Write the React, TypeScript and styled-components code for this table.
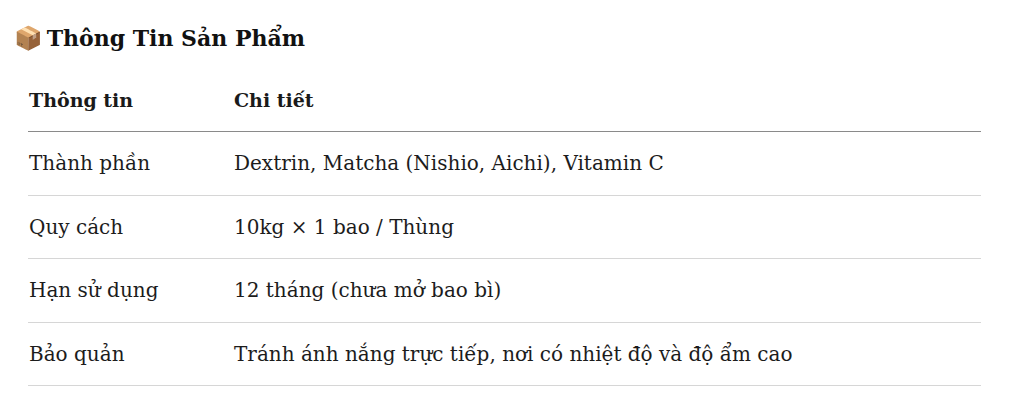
import React from "react";
import styled, { createGlobalStyle } from "styled-components";

const Global = createGlobalStyle`
  html, body { margin: 0; padding: 0; background: #ffffff; }
  body { font-family: "DejaVu Serif", "Liberation Serif", serif; color: #1a1a1a; }
`;

const Page = styled.div`
  padding: 20px 43px 0 14px;
  display: flex;
  flex-direction: column;
`;

const Title = styled.h2`
  margin: 0;
  height: 36px;
  display: flex;
  align-items: center;
  gap: 4px;
  font-size: 22px;
  font-weight: 700;
  color: #111;
`;

const Emoji = styled.span`
  font-size: 23px;
  font-family: "Noto Color Emoji", sans-serif;
`;

const Table = styled.table`
  margin: 12px 0 0 14px;
  width: calc(100% - 14px);
  border-collapse: collapse;
  font-size: 20px;
`;

const Th = styled.th<{ $w?: string }>`
  text-align: left;
  font-weight: 700;
  font-size: 19px;
  height: 63px;
  padding: 0 0 0 1px;
  border-bottom: 1px solid #8a8a8a;
  width: ${(p) => p.$w || "auto"};
`;

const Td = styled.td`
  height: 62.5px;
  padding: 0 0 0 1px;
  border-bottom: 1px solid #d6d6d6;
  color: #1c1c1c;
`;

const rows = [
  ["Thành phần", "Dextrin, Matcha (Nishio, Aichi), Vitamin C"],
  ["Quy cách", "10kg × 1 bao / Thùng"],
  ["Hạn sử dụng", "12 tháng (chưa mở bao bì)"],
  ["Bảo quản", "Tránh ánh nắng trực tiếp, nơi có nhiệt độ và độ ẩm cao"],
];

export default function App() {
  return (
    <Page>
      <Global />
      <Title>
        <Emoji>📦</Emoji>
        Thông Tin Sản Phẩm
      </Title>
      <Table>
        <thead>
          <tr>
            <Th $w="204px">Thông tin</Th>
            <Th>Chi tiết</Th>
          </tr>
        </thead>
        <tbody>
          {rows.map(([a, b]) => (
            <tr key={a}>
              <Td>{a}</Td>
              <Td>{b}</Td>
            </tr>
          ))}
        </tbody>
      </Table>
    </Page>
  );
}
